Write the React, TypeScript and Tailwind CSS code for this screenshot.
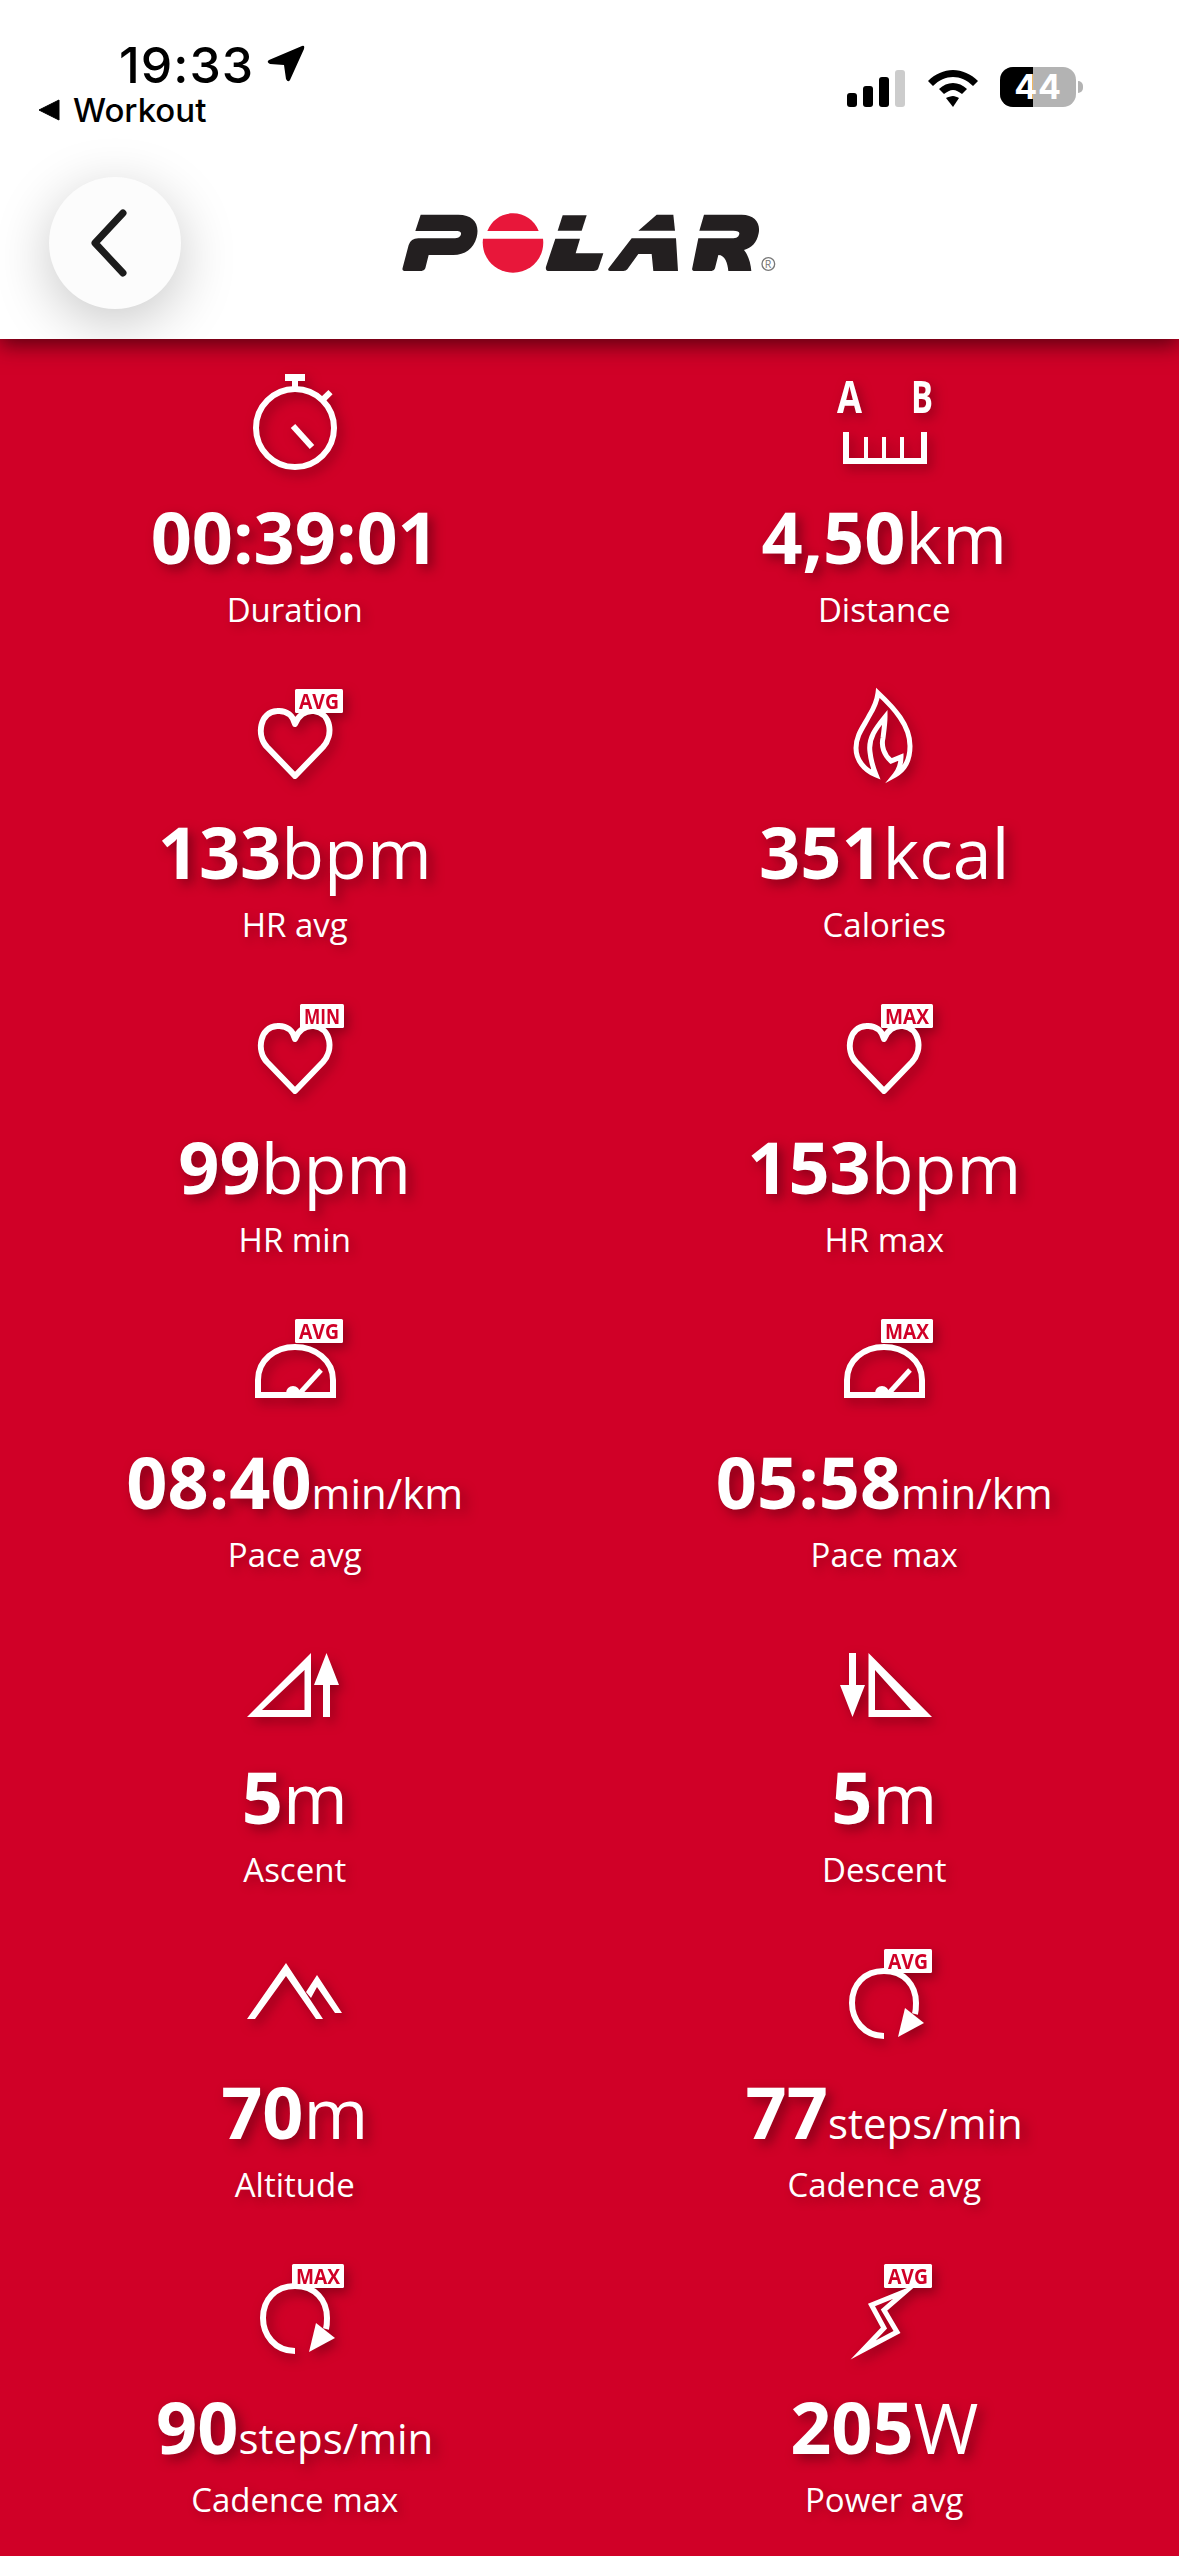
import React from 'react'

function Badge({ text }: { text: 'AVG' | 'MIN' | 'MAX' }) {
  const x = text === 'AVG' ? 80 : text === 'MIN' ? 85 : 77
  const w = text === 'AVG' ? 48 : text === 'MIN' ? 44 : 52
  return (
    <g>
      <rect x={x} y={19} width={w} height={24} rx={1.5} fill="#fff" />
      <text
        x={x + 4}
        y={38.5}
        textLength={w - 8}
        lengthAdjust="spacingAndGlyphs"
        className="fill-[#d00027] font-['Open_Sans'] text-[21px] font-bold"
      >
        {text}
      </text>
    </g>
  )
}

function Frame({ children }: { children: React.ReactNode }) {
  return (
    <svg
      width="160"
      height="130"
      viewBox="0 0 160 130"
      className="block overflow-visible [filter:drop-shadow(4px_5px_6px_rgba(90,0,15,0.55))]"
    >
      {children}
    </svg>
  )
}

function Stopwatch() {
  return (
    <Frame>
      <circle cx="80" cy="73" r="39" fill="none" stroke="#fff" strokeWidth="6" />
      <rect x="70" y="19" width="20" height="7" fill="#fff" />
      <rect x="77" y="26" width="6" height="7" fill="#fff" />
      <path d="M108 43 L116 38" stroke="#fff" strokeWidth="6" transform="rotate(-12 112 40)" />
      <path d="M78 71 L97 92" stroke="#fff" strokeWidth="6" />
    </Frame>
  )
}

function Ruler() {
  return (
    <Frame>
      <text x="33" y="58" textLength="25" lengthAdjust="spacingAndGlyphs" className="fill-white font-['Open_Sans'] text-[44px] font-bold">A</text>
      <text x="107" y="58" textLength="22" lengthAdjust="spacingAndGlyphs" className="fill-white font-['Open_Sans'] text-[44px] font-bold">B</text>
      <path d="M42 77 V106 H120 V77" fill="none" stroke="#fff" strokeWidth="6" />
      <path d="M62 82 V104 M80 82 V104 M98 82 V104" fill="none" stroke="#fff" strokeWidth="4" />
    </Frame>
  )
}

function Flame() {
  return (
    <Frame>
      <path
        d="M74 23 C90 38 106 55 106 76 C106 90 100 100 91 105 C95 100 97 94 97 87 L87 91 C80 85 77 76 79 68 C80 60 81 53 81 47 C72 58 64 68 66 82 C67 92 70 100 72 105 C60 100 52 90 52 78 C52 65 60 56 65 46 C70 38 73 31 74 23 Z"
        fill="none"
        stroke="#fff"
        strokeWidth="5"
        strokeMiterlimit="10"
      />
    </Frame>
  )
}

function Heart({ badge }: { badge: 'AVG' | 'MIN' | 'MAX' }) {
  return (
    <Frame>
      <path
        d="M80 106 L52 77 C41 65 45 42 62 41 C72 40 78 46 80 54 C83 46 90 40 99 41 C116 43 119 65 108 77 Z"
        fill="none"
        stroke="#fff"
        strokeWidth="6"
        strokeLinejoin="round"
      />
      <Badge text={badge} />
    </Frame>
  )
}

function Gauge({ badge }: { badge: 'AVG' | 'MAX' }) {
  return (
    <Frame>
      <path d="M43 95 V80 C43 60 60 47 80 47 C100 47 118 60 118 80 V95 Z" fill="none" stroke="#fff" strokeWidth="6" />
      <path d="M71 93 A7 7 0 0 1 85 93 Z" fill="#fff" />
      <path d="M85 93 L106 70" stroke="#fff" strokeWidth="5" />
      <Badge text={badge} />
    </Frame>
  )
}

function Ascent() {
  return (
    <Frame>
      <path d="M32 102 L96 38 V102 Z M47 95 H89.5 V55 Z" fill="#fff" fillRule="evenodd" />
      <path d="M111.5 38 L124 70 H115 V102 H108 V70 H99 Z" fill="#fff" />
    </Frame>
  )
}

function Descent() {
  return (
    <Frame>
      <path d="M45 38 H52 V70 H61 L48.5 102 L36 70 H45 Z" fill="#fff" />
      <path d="M64.5 38 L128 102 H64.5 Z M71 55 V95 H107 Z" fill="#fff" fillRule="evenodd" />
    </Frame>
  )
}

function Mountains() {
  return (
    <Frame>
      <polygon points="32,89 40,89 71,46 101,89 108,89 71,33" fill="#fff" />
      <polygon points="91,62 102,45 127,83 120,83 102,57 96,68" fill="#fff" />
    </Frame>
  )
}

function Cadence({ badge }: { badge: 'AVG' | 'MAX' }) {
  return (
    <Frame>
      <path d="M80 106 C60 106 48 90 48 73 C48 55 60 41 80 41 C100 41 112 55 112 73 C112 76 112 80 111 84" fill="none" stroke="#fff" strokeWidth="6" />
      <polygon points="101,78 120,93 94,107" fill="#fff" />
      <Badge text={badge} />
    </Frame>
  )
}

function Bolt() {
  return (
    <Frame>
      <path d="M102 46 L67.5 60 L80 83 L59 105 L93 87 L80 65 Z" fill="none" stroke="#fff" strokeWidth="5" strokeMiterlimit="20" />
      <Badge text="AVG" />
    </Frame>
  )
}

type Stat = {
  icon: React.ReactNode
  value: string
  unit?: string
  small?: boolean
  label: string
}

const stats: Stat[] = [
  { icon: <Stopwatch />, value: '00:39:01', label: 'Duration' },
  { icon: <Ruler />, value: '4,50', unit: 'km', label: 'Distance' },
  { icon: <Heart badge="AVG" />, value: '133', unit: 'bpm', label: 'HR avg' },
  { icon: <Flame />, value: '351', unit: 'kcal', label: 'Calories' },
  { icon: <Heart badge="MIN" />, value: '99', unit: 'bpm', label: 'HR min' },
  { icon: <Heart badge="MAX" />, value: '153', unit: 'bpm', label: 'HR max' },
  { icon: <Gauge badge="AVG" />, value: '08:40', unit: 'min/km', small: true, label: 'Pace avg' },
  { icon: <Gauge badge="MAX" />, value: '05:58', unit: 'min/km', small: true, label: 'Pace max' },
  { icon: <Ascent />, value: '5', unit: 'm', label: 'Ascent' },
  { icon: <Descent />, value: '5', unit: 'm', label: 'Descent' },
  { icon: <Mountains />, value: '70', unit: 'm', label: 'Altitude' },
  { icon: <Cadence badge="AVG" />, value: '77', unit: 'steps/min', small: true, label: 'Cadence avg' },
  { icon: <Cadence badge="MAX" />, value: '90', unit: 'steps/min', small: true, label: 'Cadence max' },
  { icon: <Bolt />, value: '205', unit: 'W', label: 'Power avg' },
]

function StatCell({ stat }: { stat: Stat }) {
  return (
    <div className="flex h-[315px] flex-col items-center">
      {stat.icon}
      <div className="mt-[6px] h-[90px] whitespace-nowrap text-[72px] leading-[90px] text-white [text-shadow:5px_5px_12px_rgba(80,0,15,0.6)]">
        <span className="font-bold">{stat.value}</span>
        {stat.unit && (
          <span className={stat.small ? 'text-[42px] font-normal' : 'text-[70px] font-normal'}>{stat.unit}</span>
        )}
      </div>
      <div className="mt-[9px] text-[33px] leading-10 text-white [text-shadow:4px_4px_10px_rgba(80,0,15,0.4)]">
        {stat.label}
      </div>
    </div>
  )
}

function StatusBar() {
  return (
    <div className="flex h-[130px] justify-between">
      <div className="pt-[38px]">
        <div className="ml-[119px] flex items-center gap-3 font-['Inter'] text-[50px] leading-[54px] font-medium tracking-[0.02em] text-black">
          <span>19:33</span>
          <svg width="40" height="40" viewBox="0 0 40 40" className="-mt-1">
            <path d="M3 17 L36 3 Q39 2 38 6 L24 37 Q22 40 20 36 L18 22 L4 21 Q0 19 3 17 Z" fill="#000" />
          </svg>
        </div>
        <div className="-mt-[2px] ml-[38px] flex items-center gap-[13px] font-['Inter'] text-[33px] leading-10 font-medium text-black">
          <svg width="22" height="22" viewBox="0 0 22 22">
            <path d="M1 11 L21 1 V21 Z" fill="#000" stroke="#000" strokeLinejoin="round" />
          </svg>
          <span>Workout</span>
        </div>
      </div>
      <div className="mt-[67px] mr-[96px] flex h-10 items-center">
        <svg width="58" height="37" viewBox="0 0 58 37" className="mt-[2px]">
          <rect x="0" y="23" width="10" height="14" rx="3" fill="#000" />
          <rect x="16" y="16" width="10" height="21" rx="3" fill="#000" />
          <rect x="32" y="7" width="10" height="30" rx="3" fill="#000" />
          <rect x="48" y="0" width="10" height="37" rx="3" fill="#ccc" />
        </svg>
        <svg width="50" height="37" viewBox="0 0 50 37" className="mt-[2px] ml-[23px]">
          <path d="M25 0 C34 0 43 4 50 11 L45 16 C39 10 32 7 25 7 C18 7 11 10 5 16 L0 11 C7 4 16 0 25 0 Z" fill="#000" />
          <path d="M25 13 C30 13 35 15 39 19 L34 24 C31 22 28 20 25 20 C22 20 19 22 16 24 L11 19 C15 15 20 13 25 13 Z" fill="#000" />
          <path d="M25 26 C27 26 29 27 31 28 L25 37 L18 28 C20 27 23 26 25 26 Z" fill="#000" />
        </svg>
        <div className="ml-[22px] flex items-center">
          <div className="relative h-10 w-[76px] overflow-hidden rounded-[13px] bg-[#b3b3b3]">
            <div className="h-full w-[33px] bg-black" />
            <span className="absolute inset-0 flex items-center justify-center font-['Inter'] text-[34px] leading-none font-bold tracking-[0.02em] text-white">
              44
            </span>
          </div>
          <div className="ml-[2px] h-[12px] w-[5px] rounded-r-full bg-[#b3b3b3]" />
        </div>
      </div>
    </div>
  )
}

function PolarLogo() {
  return (
    <svg width="400" height="90" viewBox="0 0 1200 270" className="mt-[70px] ml-[209px]">
      <path
        d="M92 44 H205 C250 44 270 72 260 112 C250 148 225 165 190 165 H116 L106 205 Q103 213 95 213 H46 Q35 213 38 203 L56 135 Q62 116 85 115 H190 C205 115 212 110 213 102 C214 95 208 93 195 93 H76 Z"
        fill="#231f20"
      />
      <path d="M292 93 C305 60 335 40 369 40 C403 40 433 60 446 93 Z" fill="#e8173a" />
      <path d="M279 116 H459 C466 170 425 218 369 218 C313 218 272 170 279 116 Z" fill="#e8173a" />
      <path d="M518 46 H590 L575 92 H503 Z" fill="#231f20" />
      <path d="M496 116 H570 L557 160 H640 L625 205 Q622 213 610 213 H478 Q465 213 468 200 Z" fill="#231f20" />
      <path d="M800 44 H850 L855 92 H745 Z" fill="#231f20" />
      <path d="M725 115 H858 L864 213 H790 L785 162 H745 L712 208 Q708 213 700 213 H662 Q650 213 657 203 Z" fill="#231f20" />
      <path
        d="M942 44 H1055 C1095 44 1112 70 1106 100 C1100 130 1085 143 1062 150 C1075 165 1082 190 1084 213 H1015 C1013 190 1005 165 985 165 L975 205 Q973 213 965 213 H915 Q904 213 907 203 L925 115 H1030 C1045 115 1048 105 1048 100 C1048 95 1042 92 1030 92 H928 Z"
        fill="#231f20"
      />
      <circle cx="1135" cy="192" r="19" fill="none" stroke="#777" strokeWidth="4" />
      <text x="1124" y="204" className="fill-[#777] font-['Open_Sans'] text-[32px]">R</text>
    </svg>
  )
}

export default function App() {
  return (
    <div className="h-[2556px] w-full overflow-hidden bg-[#d00027] font-['Open_Sans',sans-serif]">
      {/* Header */}
      <header className="relative z-10 h-[339px] bg-white shadow-[0_6px_20px_rgba(40,0,8,0.7)]">
        <StatusBar />
        <div className="flex h-[209px] items-start overflow-hidden">
          <button className="mt-[47px] ml-[49px] flex h-[132px] w-[132px] shrink-0 items-center justify-center rounded-full bg-[#fcfcfc] shadow-[0_14px_56px_rgba(0,0,0,0.22)]">
            <svg width="44" height="70" viewBox="0 0 44 70" className="mr-3">
              <path d="M36 5 L8 35 L36 65" fill="none" stroke="#1c1c1c" strokeWidth="7" strokeLinecap="round" strokeLinejoin="round" />
            </svg>
          </button>
          <PolarLogo />
        </div>
      </header>

      {/* Stats */}
      <main className="grid grid-cols-2 pt-4">
        {stats.map((s) => (
          <StatCell key={s.label} stat={s} />
        ))}
      </main>
    </div>
  )
}
